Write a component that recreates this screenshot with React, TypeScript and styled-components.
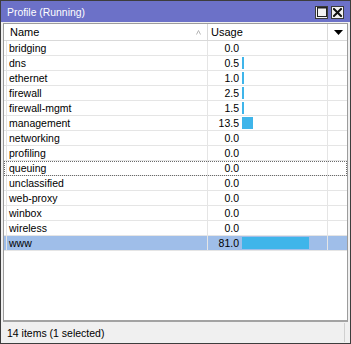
import React from 'react'
import styled, { createGlobalStyle } from 'styled-components'

const GlobalStyle = createGlobalStyle`
  html, body {
    margin: 0;
    padding: 0;
    background: #ffffff;
  }
  * {
    box-sizing: border-box;
  }
`

type Item = { name: string; usage: number }

const items: Item[] = [
  { name: 'bridging', usage: 0 },
  { name: 'dns', usage: 0.5 },
  { name: 'ethernet', usage: 1.0 },
  { name: 'firewall', usage: 2.5 },
  { name: 'firewall-mgmt', usage: 1.5 },
  { name: 'management', usage: 13.5 },
  { name: 'networking', usage: 0 },
  { name: 'profiling', usage: 0 },
  { name: 'queuing', usage: 0 },
  { name: 'unclassified', usage: 0 },
  { name: 'web-proxy', usage: 0 },
  { name: 'winbox', usage: 0 },
  { name: 'wireless', usage: 0 },
  { name: 'www', usage: 81.0 },
]

const SELECTED = 'www'
const FOCUSED = 'queuing'

const barWidth = (v: number) => (v <= 0 ? 0 : Math.max(2, Math.round(v * 0.827)))

const App = () => {
  return (
    <>
      <GlobalStyle />
      <Window>
        <TitleBar>
          <Title>Profile (Running)</Title>
          <TitleButtons>
            <WinButton aria-label='maximize'>
              <svg width='10' height='10' viewBox='0 0 10 10'>
                <rect x='0.5' y='0.5' width='9' height='9' fill='none' stroke='#222' strokeWidth='1' />
                <line x1='0' y1='1' x2='10' y2='1' stroke='#222' strokeWidth='1' />
              </svg>
            </WinButton>
            <WinButton aria-label='close'>
              <svg width='9' height='9' viewBox='0 0 9 9'>
                <path d='M1 1 L8 8 M8 1 L1 8' stroke='#111' strokeWidth='2' strokeLinecap='square' />
              </svg>
            </WinButton>
          </TitleButtons>
        </TitleBar>
        <Body>
          <List>
            <Header>
              <HeadCell>
                Name
                <SortMark width='5' height='5' viewBox='0 0 5 5'>
                  <polyline points='0.5,4.5 2.5,0.5 4.5,4.5' fill='none' stroke='#b5b5b5' strokeWidth='1' />
                </SortMark>
              </HeadCell>
              <HeadCell $pad={3}>Usage</HeadCell>
              <HeadMenu>
                <svg width='9' height='5' viewBox='0 0 9 5'>
                  <polygon points='0,0 9,0 4.5,5' fill='#000' />
                </svg>
              </HeadMenu>
            </Header>
            {items.map((it) => (
              <Row key={it.name} $selected={it.name === SELECTED} $focused={it.name === FOCUSED}>
                <Strip />
                <NameCell>{it.name}</NameCell>
                <UsageCell>
                  <Value>{it.usage.toFixed(1)}</Value>
                  <Bar style={{ width: barWidth(it.usage) }} />
                </UsageCell>
                <EndCell />
              </Row>
            ))}
          </List>
          <StatusBar>
            <StatusPanel>14 items (1 selected)</StatusPanel>
          </StatusBar>
        </Body>
      </Window>
    </>
  )
}

export default App

const Window = styled.div`
  width: 351px;
  height: 344px;
  border: 1px solid #3d3d3d;
  background: #f0f0f0;
  display: flex;
  flex-direction: column;
  font-family: 'Liberation Sans', Arial, sans-serif;
  font-size: 10.5px;
  color: #000;
`
const TitleBar = styled.div`
  height: 21px;
  flex: none;
  background: #6c71c8;
  display: flex;
  align-items: center;
  justify-content: space-between;
  padding: 0 6px 0 6px;
`
const Title = styled.div`
  color: #ffffff;
  font-size: 10.4px;
  padding-top: 1px;
`
const TitleButtons = styled.div`
  display: flex;
  gap: 3px;
  padding-top: 1px;
`
const WinButton = styled.div`
  width: 13px;
  height: 13px;
  background: #f2f2f2;
  border: 1px solid #3a3a3a;
  display: flex;
  align-items: center;
  justify-content: center;
`
const Body = styled.div`
  flex: 1;
  display: flex;
  flex-direction: column;
  padding: 1px 2px 0 2px;
`
const List = styled.div`
  flex: 1;
  background: #ffffff;
  border: 1px solid #9c9c9c;
  border-bottom-width: 2px;
  border-bottom-color: #a3a3a3;
  overflow: hidden;
`
const Header = styled.div`
  display: grid;
  grid-template-columns: 204px 120px 1fr;
  height: 17px;
  border-bottom: 1px solid #d9d9d9;
  background: #ffffff;
`
const HeadCell = styled.div<{ $pad?: number }>`
  position: relative;
  display: flex;
  align-items: center;
  padding-left: ${(p) => p.$pad ?? 6}px;
  border-right: 1px solid #d9d9d9;
  font-size: 11px;
  white-space: nowrap;
`
const SortMark = styled.svg`
  position: absolute;
  right: 6px;
  top: 6px;
`
const HeadMenu = styled.div`
  display: flex;
  align-items: center;
  justify-content: center;
  padding-left: 1px;
`
const Row = styled.div<{ $selected?: boolean; $focused?: boolean }>`
  display: grid;
  grid-template-columns: 3px 201px 120px 1fr;
  height: 15px;
  border-bottom: 1px solid #e5e5e5;
  background: ${(p) => (p.$selected ? '#9fbee9' : '#ffffff')};
  outline: ${(p) => (p.$focused ? '1px dotted #6a6a6a' : 'none')};
  outline-offset: -1px;
`
const Strip = styled.div`
  border-right: 1px solid #e5e5e5;
`
const NameCell = styled.div`
  padding-left: 2px;
  line-height: 14px;
  border-right: 1px solid #e5e5e5;
  white-space: nowrap;
`
const UsageCell = styled.div`
  display: flex;
  align-items: center;
  border-right: 1px solid #e5e5e5;
`
const Value = styled.div`
  width: 31px;
  text-align: right;
  line-height: 14px;
  margin-right: 3px;
`
const Bar = styled.div`
  height: 12px;
  background: #3fb5ea;
`
const EndCell = styled.div``
const StatusBar = styled.div`
  height: 21px;
  flex: none;
  display: flex;
  padding: 1px 0 1px 0;
`
const StatusPanel = styled.div`
  flex: 1;
  display: flex;
  align-items: center;
  padding-left: 4px;
  border-right: 1px solid #d0d0d0;
  margin-right: 3px;
`
